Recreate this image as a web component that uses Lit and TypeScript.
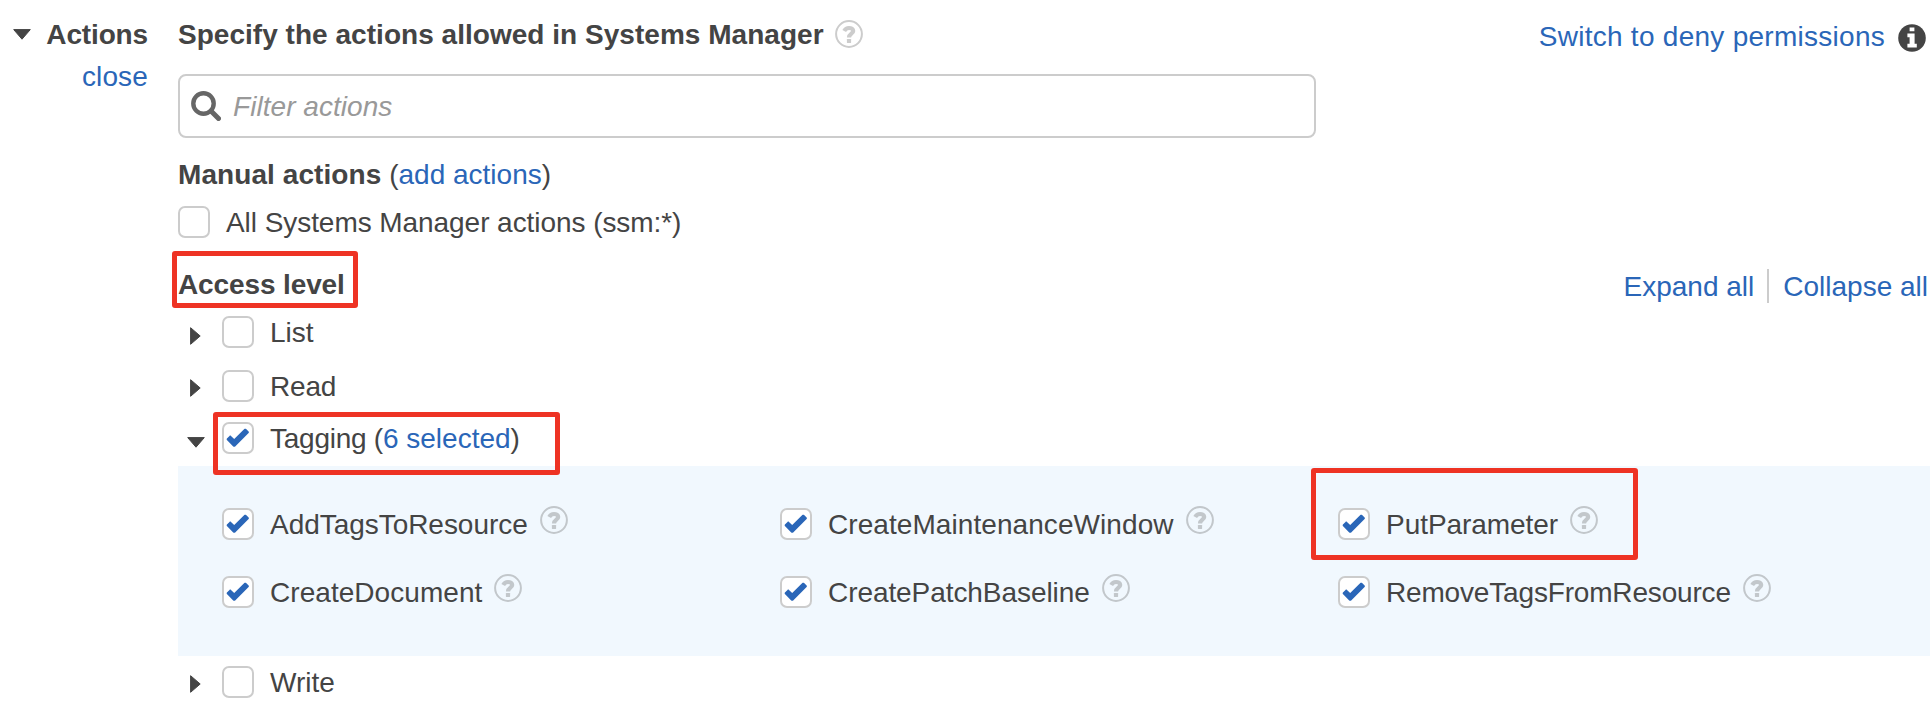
import { LitElement, html, css, nothing } from "lit";
import { customElement, property } from "lit/decorators.js";

const base = css`
  * { box-sizing: border-box; }
  svg { display: block; flex: none; }
`;

@customElement("help-icon")
class HelpIcon extends LitElement {
  static styles = [base, css`
    :host { display: block; flex: none; width: 28px; height: 28px; }
    .ring { fill: none; stroke: currentColor; stroke-width: 2; }
    .hook { fill: none; stroke: currentColor; stroke-width: 4.2; }
    .dot { fill: currentColor; }
  `];
  render() {
    return html`<svg width="28" height="28" viewBox="0 0 28 28">
      <circle class="ring" cx="14" cy="14" r="12.9" />
      <path class="hook" d="M9.2 10.9C10.3 8.9 12 8 14 8C16.3 8 18.2 9.2 18.2 11C18.2 13.8 14 13.6 14 17.6" />
      <rect class="dot" x="11.9" y="19" width="4.2" height="4" rx="0.4" />
    </svg>`;
  }
}

@customElement("check-box")
class CheckBox extends LitElement {
  @property({ type: Boolean }) checked = false;
  static styles = [base, css`
    :host { display: block; flex: none; width: 32px; height: 32px; }
    .box { width: 32px; height: 32px; border: 2px solid #ccc; border-radius: 7px; background: #fff; }
    .mark { fill: #2a66b8; }
  `];
  render() {
    return html`<div class="box">${this.checked
      ? html`<svg width="28" height="28" viewBox="0 0 28 28"><path class="mark" d="M24.6 7.4C25 7.8 25 8.6 24.6 9L11.2 22.4C10.6 23 9.8 23 9.2 22.4L2.9 16.1C2.5 15.7 2.5 15 2.9 14.6L5.5 11.9C5.9 11.5 6.6 11.5 7 11.9L10.2 15L20.3 5.1C20.8 4.6 21.6 4.6 22.1 5.1Z" /></svg>`
      : nothing}</div>`;
  }
}

@customElement("caret-icon")
class CaretIcon extends LitElement {
  @property({ type: Boolean }) open = false;
  static styles = [base, css`
    :host { display: block; flex: none; }
    .shape { fill: #444; stroke: #444; stroke-width: 1; stroke-linejoin: round; }
  `];
  render() {
    return this.open
      ? html`<svg width="18" height="11" viewBox="0 0 18 11"><path class="shape" d="M0.7 0.6H17.3L9 10.2Z" /></svg>`
      : html`<svg width="11" height="18" viewBox="0 0 11 18"><path class="shape" d="M0.6 0.7V17.3L10.2 9Z" /></svg>`;
  }
}

const tagging = [
  { name: "AddTagsToResource", tracking: -0.04 },
  { name: "CreateMaintenanceWindow", tracking: 0.07 },
  { name: "PutParameter", tracking: -0.05, marked: true },
  { name: "CreateDocument", tracking: 0.05 },
  { name: "CreatePatchBaseline", tracking: -0.07 },
  { name: "RemoveTagsFromResource", tracking: -0.17 },
];

@customElement("app-root")
class AppRoot extends LitElement {
  static styles = [base, css`
    :host {
      display: block; height: 718px; overflow: hidden; background: #fff; color: #444;
      font: 28px/34px "Liberation Sans", Arial, Helvetica, sans-serif;
      white-space: nowrap;
    }
    a { color: #2a66b8; text-decoration: none; }
    b { font-weight: 700; }
    .page { display: grid; grid-template-columns: 148px 1752px; column-gap: 30px; padding-top: 18px; }
    .side { display: flex; flex-direction: column; align-items: flex-end; gap: 8px; }
    .side-title { display: flex; align-items: flex-start; gap: 15px; letter-spacing: -0.15px; }
    .close { letter-spacing: 0.15px; }
    .side-title caret-icon { margin-top: 11px; }
    .head { display: flex; justify-content: space-between; align-items: flex-start; height: 32px; }
    .title { display: flex; gap: 11px; letter-spacing: 0.03px; }
    .title help-icon { margin-top: 2px; color: #ccc; }
    .switch { display: flex; gap: 13px; padding: 2px 4px 0 0; letter-spacing: 0.27px; }
    .switch svg { margin-top: 4px; }
    .search { display: flex; align-items: center; gap: 12px; width: 1138px; height: 64px; margin-top: 24px; padding-left: 11px; border: 2px solid #ccc; border-radius: 8px; color: #999; font-style: italic; }
    .hint { padding-top: 2px; letter-spacing: 0.05px; }
    .manual { height: 32px; margin-top: 20px; }
    .manual b { letter-spacing: 0.08px; }
    .row { display: flex; gap: 16px; height: 32px; position: relative; }
    .all { margin-top: 16px; letter-spacing: -0.06px; }
    .access { display: flex; justify-content: space-between; height: 32px; margin-top: 30px; }
    .access-title { position: relative; letter-spacing: -0.12px; }
    .links { display: flex; padding: 2px 2px 0 0; }
    .divider { width: 2px; height: 34px; margin: -1px 14px 0 13px; background: #ccc; }
    .level { display: grid; grid-template-columns: 32px auto; height: 32px; padding-left: 12px; }
    .level caret-icon { margin-top: 11px; }
    .level.open { padding-left: 9px; grid-template-columns: 35px auto; }
    .level.open caret-icon { margin-top: 15px; }
    .level.raised caret-icon { margin-top: 9px; }
    .list { margin-top: 16px; }
    .read { margin-top: 22px; letter-spacing: -0.2px; }
    .tagging { margin-top: 20px; letter-spacing: -0.25px; }
    .tagging a { letter-spacing: 0; }
    .panel { display: grid; grid-template-columns: repeat(3, 558px); align-content: start; row-gap: 36px; height: 190px; margin-top: 12px; padding: 42px 0 0 44px; background: #f1f8fe; }
    .panel help-icon { margin: -2px 0 0 -4px; color: #c2c7cb; }
    .write { margin-top: 10px; }
    .mark { position: absolute; border: 5.5px solid #ee3324; border-radius: 3px; pointer-events: none; }
    .mark-access { left: -6px; top: -17px; width: 186px; height: 57px; }
    .mark-tagging { left: -9px; top: -10px; width: 347px; height: 63px; }
    .mark-put { left: -27px; top: -40px; width: 327px; height: 92px; }
  `];

  level(name: string, cls: string) {
    return html`<div class="level ${cls}"><caret-icon></caret-icon><div class="row"><check-box></check-box><span>${name}</span></div></div>`;
  }

  render() {
    return html`<div class="page">
      <div class="side">
        <div class="side-title"><caret-icon open></caret-icon><b>Actions</b></div>
        <a class="close">close</a>
      </div>
      <div class="main">
        <div class="head">
          <div class="title"><b>Specify the actions allowed in Systems Manager</b><help-icon></help-icon></div>
          <div class="switch"><a>Switch to deny permissions</a>
            <svg width="28" height="28" viewBox="0 0 28 28"><circle cx="14" cy="14" r="13.8" fill="#444" /><path fill="#fff" d="M11.6 3.5H16.4V7.2H11.6ZM9.4 9.5H16.6V19.7H18.8V23.4H9.4V19.7H11.6V13.2H9.4Z" /></svg>
          </div>
        </div>
        <div class="search">
          <svg width="30" height="30" viewBox="0 0 30 30" fill="none" stroke="#666"><circle cx="12.5" cy="12.5" r="10.2" stroke-width="4.4" /><path d="M20 20L27.5 27.5" stroke-width="5" stroke-linecap="round" /></svg>
          <span class="hint">Filter actions</span>
        </div>
        <div class="manual"><b>Manual actions</b> (<a>add actions</a>)</div>
        <div class="row all"><check-box></check-box><span>All Systems Manager actions (ssm:*)</span></div>
        <div class="access">
          <div class="access-title"><b>Access level</b><div class="mark mark-access"></div></div>
          <div class="links"><a>Expand all</a><div class="divider"></div><a>Collapse all</a></div>
        </div>
        ${this.level("List", "list")}
        ${this.level("Read", "read raised")}
        <div class="level open tagging"><caret-icon open></caret-icon><div class="row"><check-box checked></check-box><span>Tagging (<a>6 selected</a>)</span><div class="mark mark-tagging"></div></div></div>
        <div class="panel">${tagging.map((t) => html`<div class="row"><check-box checked></check-box><span style="letter-spacing:${t.tracking}px">${t.name}</span><help-icon></help-icon>${t.marked ? html`<div class="mark mark-put"></div>` : nothing}</div>`)}</div>
        ${this.level("Write", "write raised")}
      </div>
    </div>`;
  }
}
